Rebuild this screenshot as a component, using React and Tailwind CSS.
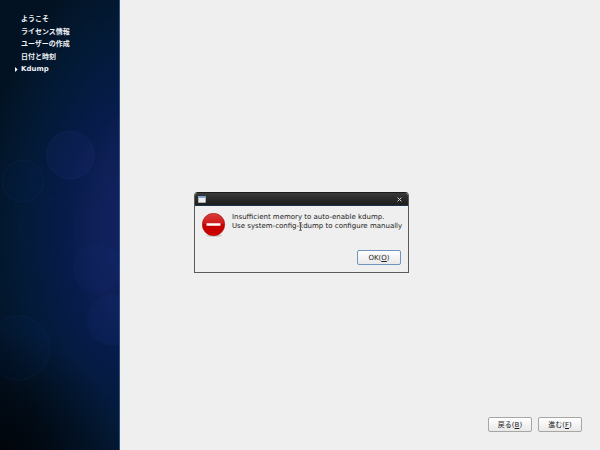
import React from "react";

const steps = ["ようこそ", "ライセンス情報", "ユーザーの作成", "日付と時刻", "Kdump"];

function Backdrop() {
  return (
    <svg
      className="absolute inset-0 h-full w-full"
      viewBox="0 0 120 450"
      preserveAspectRatio="none"
      aria-hidden="true"
    >
      <defs>
        <radialGradient id="glow" gradientUnits="userSpaceOnUse" cx="0" cy="0" r="1" gradientTransform="translate(150 225) rotate(4) scale(175 280)">
          <stop offset="0" stopColor="#11246a" />
          <stop offset="0.3" stopColor="#0f2058" />
          <stop offset="0.5" stopColor="#061b48" />
          <stop offset="0.75" stopColor="#031a36" />
          <stop offset="1" stopColor="#021222" />
        </radialGradient>
        <radialGradient id="corner" gradientUnits="userSpaceOnUse" cx="0" cy="450" r="120">
          <stop offset="0" stopColor="#01050b" />
          <stop offset="1" stopColor="#01050b" stopOpacity="0" />
        </radialGradient>
      </defs>
      <rect width="120" height="450" fill="url(#glow)" />
      <rect width="120" height="450" fill="url(#corner)" />
      <g fill="#2a48b0" fillOpacity="0.03" stroke="#3a58b8" strokeOpacity="0.1" strokeWidth="1">
        <circle cx="71" cy="155" r="24" fill="#3a38a8" fillOpacity="0.1" />
        <circle cx="23" cy="181" r="21" />
        <circle cx="18" cy="348" r="32" />
        <circle cx="98" cy="268" r="24" fillOpacity="0.06" strokeOpacity="0.05" />
        <circle cx="113" cy="320" r="25" fillOpacity="0.08" strokeOpacity="0.05" />
      </g>
      <circle cx="49" cy="227" r="29" fill="none" stroke="#3a58b8" strokeOpacity="0.06" />
    </svg>
  );
}

function Sidebar() {
  return (
    <aside className="relative w-1/5 shrink-0 overflow-hidden border-r border-[#2f5480] bg-[#010e20]">
      <Backdrop />
      <ol className="relative pt-[13px] pl-[14px] text-[7px] leading-3 font-bold text-[#eef1f5]">
        {steps.map((step) => {
          const current = step === "Kdump";
          return (
            <li
              key={step}
              aria-current={current ? "step" : undefined}
              className="flex h-3 items-center whitespace-nowrap even:mt-px"
            >
              <span className="flex w-[7px] shrink-0">
                {current && (
                  <svg className="h-[5px] w-1" viewBox="0 0 4 5" aria-hidden="true">
                    <path d="M1 0 L3.6 2.5 L1 5 Z" fill="#fff" />
                  </svg>
                )}
              </span>
              {step}
            </li>
          );
        })}
      </ol>
    </aside>
  );
}

function Button({ children, access, focused = false }) {
  return (
    <button
      type="button"
      className={
        "flex h-[15px] w-11 items-center justify-center rounded-[2px] border bg-linear-to-b from-white to-[#e9e9e9] pt-px text-[7px] leading-none whitespace-nowrap text-[#1c1c1c] " +
        (focused ? "border-[#6f94bd]" : "border-[#a9a6a2]")
      }
    >
      {children}(<span className="underline">{access}</span>)
    </button>
  );
}

function ErrorIcon() {
  return (
    <svg className="h-6 w-6 shrink-0" viewBox="0 0 24 24" role="img" aria-label="Error">
      <defs>
        <linearGradient id="sign" x1="0" y1="0" x2="0" y2="1">
          <stop offset="0" stopColor="#d8403c" />
          <stop offset="0.45" stopColor="#cf1a1a" />
          <stop offset="0.5" stopColor="#c40000" />
          <stop offset="1" stopColor="#cc0000" />
        </linearGradient>
      </defs>
      <ellipse cx="12" cy="22.5" rx="8" ry="1.4" fill="#000" fillOpacity="0.15" />
      <circle cx="11.5" cy="11.5" r="11.2" fill="url(#sign)" stroke="#b01010" strokeWidth="0.6" />
      <rect x="4.5" y="10.2" width="14" height="2.5" rx="0.3" fill="#fff" />
    </svg>
  );
}

function Dialog() {
  return (
    <section
      role="alertdialog"
      aria-labelledby="message"
      className="w-[215px] overflow-hidden rounded-t-[4px] border border-[#5a5a5a] border-t-[#1a1a1a] bg-[#efefef]"
    >
      <header className="flex h-[13px] items-center justify-between border-b border-[#1c3350] bg-linear-to-b from-[#3a3a3a] via-[#292929] to-[#1e1e1e] pr-[6px] pl-[3px]">
        <svg className="h-[7px] w-2" viewBox="0 0 8 7" aria-hidden="true">
          <rect x="0.5" y="0.5" width="7" height="6" fill="#eeeeec" stroke="#c9ccd0" strokeWidth="0.6" />
          <rect x="0.3" y="0.2" width="7.4" height="1.6" fill="#6d9bd3" />
        </svg>
        <button type="button" aria-label="Close" className="flex">
          <svg className="h-[5px] w-[5px]" viewBox="0 0 5 5" aria-hidden="true">
            <path d="M0.6 0.6 L4.4 4.4 M4.4 0.6 L0.6 4.4" stroke="#d8d8d8" strokeWidth="1" />
          </svg>
        </button>
      </header>
      <div className="flex gap-[6px] pt-[7px] pr-1.5 pl-[7px]">
        <ErrorIcon />
        <p id="message" className="text-[7px] leading-[9px] whitespace-nowrap text-[#1a1a1a]">
          Insufficient memory to auto-enable kdump.
          <br />
          Use system-config-
          <span className="relative">
            <svg className="absolute top-0 -left-px h-[9px] w-[5px]" viewBox="0 0 5 9" aria-hidden="true">
              <path d="M1 0.8 H4 M2.5 0.8 V8.2 M1 8.2 H4" stroke="#fff" strokeOpacity="0.7" strokeWidth="1.8" fill="none" />
              <path d="M1 0.8 H4 M2.5 0.8 V8.2 M1 8.2 H4" stroke="#4a4a4a" strokeWidth="0.9" fill="none" />
            </svg>
            kdump
          </span>{" "}
          to configure manually
        </p>
      </div>
      <footer className="flex justify-end pt-[13px] pr-[7px] pb-[7px]">
        <Button access="O" focused>
          OK
        </Button>
      </footer>
    </section>
  );
}

export default function App() {
  return (
    <div className="relative flex min-h-screen bg-[#efefef] font-['DejaVu_Sans','Noto_Sans_CJK_JP',sans-serif]">
      <Sidebar />
      <main className="flex min-w-0 flex-1 items-end justify-end gap-1.5 p-[18px]">
        <Button access="B">戻る</Button>
        <Button access="F">進む</Button>
      </main>
      <div className="absolute inset-0 flex items-center justify-center pt-[15px] pl-[3px]">
        <Dialog />
      </div>
    </div>
  );
}
